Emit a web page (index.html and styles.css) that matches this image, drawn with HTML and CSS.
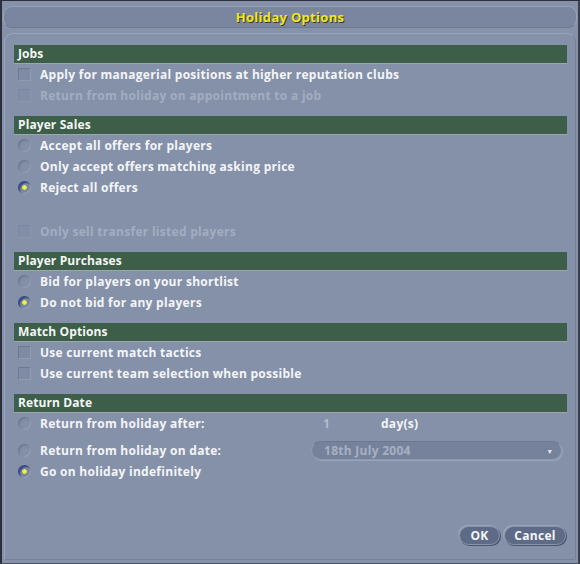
FILE: index.html
```html
<!DOCTYPE html>
<html>
<head>
<meta charset="utf-8">
<link rel="stylesheet" href="styles.css">
</head>
<body>
<div class="window">
  <div class="titlebar"><span class="title">Holiday Options</span></div>
  <div class="panel">
    <section class="group">
      <div class="ghead">Jobs</div>
      <div class="row"><span class="check"></span><span class="label">Apply for managerial positions at higher reputation clubs</span></div>
      <div class="row disabled"><span class="check"></span><span class="label">Return from holiday on appointment to a job</span></div>
    </section>
    <section class="group">
      <div class="ghead">Player Sales</div>
      <div class="row"><span class="radio"></span><span class="label">Accept all offers for players</span></div>
      <div class="row"><span class="radio"></span><span class="label">Only accept offers matching asking price</span></div>
      <div class="row"><span class="radio on"></span><span class="label">Reject all offers</span></div>
      <div class="spacer"></div>
      <div class="row disabled"><span class="check"></span><span class="label">Only sell transfer listed players</span></div>
    </section>
    <section class="group">
      <div class="ghead">Player Purchases</div>
      <div class="row"><span class="radio"></span><span class="label">Bid for players on your shortlist</span></div>
      <div class="row"><span class="radio on"></span><span class="label">Do not bid for any players</span></div>
    </section>
    <section class="group">
      <div class="ghead">Match Options</div>
      <div class="row"><span class="check"></span><span class="label">Use current match tactics</span></div>
      <div class="row"><span class="check"></span><span class="label">Use current team selection when possible</span></div>
    </section>
    <section class="group">
      <div class="ghead">Return Date</div>
      <div class="row"><span class="radio"></span><span class="label wide">Return from holiday after:</span><span class="days"><span class="num">1</span><span class="unit">day(s)</span></span></div>
      <div class="row tall"><span class="radio"></span><span class="label wide">Return from holiday on date:</span><span class="select"><span class="seltext">18th July 2004</span><span class="arrow">▾</span></span></div>
      <div class="row"><span class="radio on"></span><span class="label">Go on holiday indefinitely</span></div>
    </section>
    <div class="actions">
      <button class="btn ok">OK</button>
      <button class="btn cancel">Cancel</button>
    </div>
  </div>
</div>
</body>
</html>
```
FILE: styles.css
```css
html, body {
  margin: 0;
  padding: 0;
  background: #8691a9;
}
.window {
  width: 580px;
  height: 564px;
  box-sizing: border-box;
  background: #8692aa;
  border-left: 2px solid #2c303c;
  border-right: 2px solid #3a3f4d;
  border-top: 1px solid #2c303c;
  border-bottom: 1px solid #4a5060;
  display: flex;
  flex-direction: column;
  font-family: "Open Sans", "DejaVu Sans", sans-serif;
  font-weight: 700;
  font-size: 12px;
  letter-spacing: 0.28px;
  color: #f4f5f8;
}
.titlebar {
  margin: 5px 1px 0 1px;
  height: 22px;
  box-sizing: border-box;
  border-radius: 9px;
  background: #7a869f;
  border: 1px solid #97a2b9;
  border-bottom-color: #6c7790;
  display: flex;
  align-items: center;
  justify-content: center;
}
.title {
  color: #f2e626;
  font-size: 13px;
  letter-spacing: 0.3px;
  text-shadow: 1px 1px 0 #3a3a20;
}
.panel {
  flex: 1;
  margin: 5px 2px 3px 2px;
  border: 1px solid #9ba6bc;
  border-right-color: #76819a;
  border-bottom-color: #76819a;
  border-radius: 9px 9px 2px 2px;
  padding: 11px 8px 14px 9px;
  display: flex;
  flex-direction: column;
  background: #8591a9;
}
.group {
  margin-bottom: 10px;
}
.ghead {
  height: 19px;
  box-sizing: border-box;
  background: #3d5e49;
  border-bottom: 1px solid #9aa7ad;
  padding-left: 4px;
  line-height: 18px;
  font-size: 12px;
  letter-spacing: 0.1px;
  color: #f4f6f4;
}
.row {
  height: 21px;
  display: flex;
  align-items: center;
  padding-left: 4px;
}
.row.tall {
  height: 27px;
  padding-top: 5px;
  box-sizing: border-box;
}
.spacer {
  height: 23px;
}
.label {
  margin-left: 9px;
  white-space: nowrap;
}
.label.wide {
  width: 270px;
}
.disabled .label {
  color: #a3adc1;
}
.check {
  width: 13px;
  height: 13px;
  box-sizing: border-box;
  background: #7f8aa4;
  border: 1px solid #6d7891;
  border-right-color: #929db4;
  border-bottom-color: #929db4;
  flex: none;
}
.disabled .check {
  background: #828ea7;
  border-color: #7b86a0;
  border-right-color: #8c97ae;
  border-bottom-color: #8c97ae;
}
.radio {
  width: 13px;
  height: 13px;
  border-radius: 50%;
  box-sizing: border-box;
  background: radial-gradient(circle at 60% 60%, #8792aa 0%, #7d88a2 70%, #727d97 100%);
  box-shadow: inset 1px 1px 1px #6c7690, inset -1px -1px 1px #96a1b7;
  flex: none;
}
.radio.on {
  background: radial-gradient(circle at 50% 50%, #f2f860 0%, #dfe440 22%, #7b87a0 30%, #76829c 70%, #6a7694 100%);
  box-shadow: inset 2px 2px 1px #3c4a86, inset -1px -1px 1px #96a1b7;
}
.days {
  display: flex;
  align-items: center;
  margin-left: 13px;
}
.num {
  width: 58px;
  color: #b3bccd;
}
.unit {
  color: #f4f5f8;
}
.select {
  width: 251px;
  height: 19px;
  box-sizing: border-box;
  margin-left: 1px;
  border-radius: 10px;
  background: #76829b;
  border: 1px solid #8e99b0;
  border-top-color: #6b7690;
  box-shadow: 1px 1px 0 #9aa5bb;
  display: flex;
  align-items: center;
  justify-content: space-between;
  padding: 0 9px 0 12px;
}
.seltext {
  color: #a6b0c3;
}
.arrow {
  color: #e0e4ec;
  font-size: 8px;
}
.actions {
  margin-top: auto;
  display: flex;
  justify-content: flex-end;
  gap: 4px;
  margin-right: 1px;
}
.btn {
  height: 19px;
  border-radius: 10px;
  border: 1px solid #8893aa;
  background: #5e6b87;
  box-shadow: 1px 1px 0 #4a5470, -1px -1px 0 #9aa5ba;
  color: #f4f5f8;
  font-family: "Open Sans", "DejaVu Sans", sans-serif;
  font-weight: 700;
  font-size: 12px;
  letter-spacing: 0.3px;
  padding: 0;
  line-height: 17px;
}
.btn.ok {
  width: 41px;
}
.btn.cancel {
  width: 62px;
}
```
